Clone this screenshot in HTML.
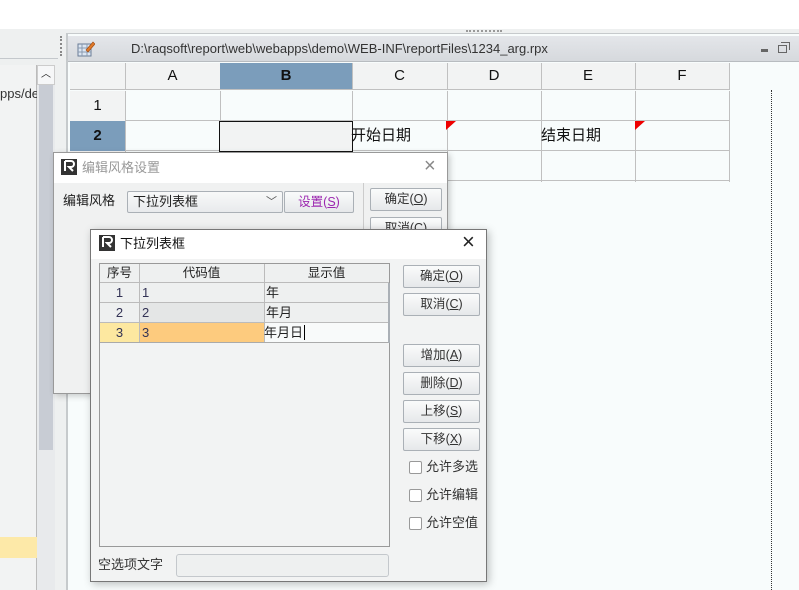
<!DOCTYPE html><html><head><style>
*{box-sizing:border-box;margin:0;padding:0}
body{width:799px;height:590px;overflow:hidden;background:#eef0f0;font-family:"Liberation Sans","Noto Sans CJK SC",sans-serif;font-size:13px;line-height:16px;color:#222;position:relative}
.a{position:absolute}
.btn{position:absolute;border:1px solid #aab0b6;border-radius:2px;background:linear-gradient(#fafbfb,#e6e8ea);text-align:center;line-height:20px;font-size:12.5px;color:#333}
.cell{position:absolute;border-right:1px solid #c0c0c0;border-bottom:1px solid #c0c0c0;text-align:center;font-size:15px;line-height:29px;color:#111}
.cb{position:absolute;width:13px;height:13px;border:1px solid #999;border-radius:2px;background:#fff}
</style></head><body>
<div class="a" style="left:0;top:0;width:799px;height:29px;background:#fff"></div>
<div class="a" style="left:466px;top:30px;width:36px;height:3px;border-top:2px dotted #999"></div>
<!-- left panel -->
<div class="a" style="left:0;top:58px;width:58px;height:1px;background:#c4c8cc"></div>
<div class="a" style="left:0;top:65px;width:37px;height:525px;background:#f2f3f3;border-right:1px solid #bbb"></div>
<div class="a" style="left:0;top:86px;font-size:13px;color:#333">pps/de</div>
<div class="a" style="left:37px;top:65px;width:18px;height:525px;background:#e8eaec"></div>
<div class="a" style="left:37px;top:65px;width:18px;height:20px;background:#f6f7f8;border:1px solid #ccc;font-size:10px;text-align:center;line-height:18px">︿</div>
<div class="a" style="left:39px;top:85px;width:14px;height:365px;background:#c8ccd4"></div>
<div class="a" style="left:0;top:537px;width:37px;height:21px;background:#fde9a8"></div>
<div class="a" style="left:60px;top:36px;width:4px;height:20px;border-left:2px dotted #888"></div>
<!-- main doc -->
<div class="a" style="left:66px;top:33px;width:733px;height:557px;background:#f8fcfc;border-left:2px solid #c6cacc;border-top:1px solid #c6cacc"></div>
<div class="a" style="left:68px;top:36px;width:731px;height:26px;background:linear-gradient(#e4e6ea,#d6d9dd);border-bottom:1px solid #b8bcc0"></div>
<svg class="a" style="left:77px;top:40px" width="18" height="18"><rect x="1" y="4" width="13" height="12" fill="#dce6f2" stroke="#6a7c96"/><path d="M1 8h13M1 12h13M5 4v12M10 4v12" stroke="#8a9ab0"/><path d="M9 10l7-8 2 2-7 8z" fill="#e07a2a" stroke="#a04a10" stroke-width=".6"/></svg>
<div class="a" style="left:131px;top:41px;font-size:13px;color:#333">D:\raqsoft\report\web\webapps\demo\WEB-INF\reportFiles\1234_arg.rpx</div>
<div class="a" style="left:761px;top:49px;width:7px;height:3px;background:#666"></div>
<div class="a" style="left:778px;top:45px;width:9px;height:8px;border:1px solid #666"></div>
<div class="a" style="left:781px;top:42px;width:9px;height:8px;border-top:1px solid #666;border-right:1px solid #666"></div>
<!-- grid header -->
<div class="a" style="left:70px;top:63px;width:660px;height:27px;background:#f2f3f3"></div>
<div class="cell" style="left:70px;top:63px;width:56px;height:27px;line-height:26px"></div>
<div class="cell" style="left:125px;top:63px;width:96px;height:27px;line-height:26px">A</div>
<div class="cell" style="left:220px;top:63px;width:133px;height:27px;line-height:26px;background:#7b9dbb;font-weight:bold">B</div>
<div class="cell" style="left:352px;top:63px;width:96px;height:27px;line-height:26px">C</div>
<div class="cell" style="left:447px;top:63px;width:95px;height:27px;line-height:26px">D</div>
<div class="cell" style="left:541px;top:63px;width:95px;height:27px;line-height:26px">E</div>
<div class="cell" style="left:635px;top:63px;width:95px;height:27px;line-height:26px">F</div>
<div class="cell" style="left:70px;top:91px;width:56px;height:31px;background:#f2f3f3">1</div>
<div class="cell" style="left:70px;top:121px;width:56px;height:31px;background:#7b9dbb;font-weight:bold">2</div>
<div class="cell" style="left:70px;top:151px;width:56px;height:31px;background:#f2f3f3"></div>
<div class="a" style="left:125px;top:91px;width:605px;height:91px;border-left:1px solid #c0c0c0;background:
linear-gradient(#c0c0c0,#c0c0c0) 0 29px/100% 1px no-repeat,linear-gradient(#c0c0c0,#c0c0c0) 0 59px/100% 1px no-repeat,linear-gradient(#c0c0c0,#c0c0c0) 0 89px/100% 1px no-repeat,
linear-gradient(#c0c0c0,#c0c0c0) 94px 0/1px 100% no-repeat,linear-gradient(#c0c0c0,#c0c0c0) 226px 0/1px 100% no-repeat,linear-gradient(#c0c0c0,#c0c0c0) 321px 0/1px 100% no-repeat,linear-gradient(#c0c0c0,#c0c0c0) 415px 0/1px 100% no-repeat,linear-gradient(#c0c0c0,#c0c0c0) 509px 0/1px 100% no-repeat,linear-gradient(#c0c0c0,#c0c0c0) 603px 0/1px 100% no-repeat"></div>
<div class="a" style="left:219px;top:121px;width:134px;height:31px;border:1px solid #111;background:#f2f3f3"></div>
<div class="a" style="left:351px;top:128px;font-size:15px;color:#111">开始日期</div>
<div class="a" style="left:541px;top:128px;font-size:15px;color:#111">结束日期</div>
<svg class="a" style="left:446px;top:121px" width="10" height="10"><path d="M0 0h10L0 9z" fill="#e00"/></svg>
<svg class="a" style="left:635px;top:121px" width="10" height="10"><path d="M0 0h10L0 9z" fill="#e00"/></svg>
<div class="a" style="left:771px;top:90px;width:1px;height:500px;border-left:1px dotted #333"></div>
<!-- dialog 1 -->
<div class="a" style="left:53px;top:152px;width:395px;height:242px;background:#f0f1f1;border:1px solid #999;box-shadow:2px 2px 6px rgba(0,0,0,.2)"></div>
<div class="a" style="left:54px;top:153px;width:393px;height:30px;background:#fff"></div>
<svg class="a" style="left:61px;top:159px" width="16" height="16"><rect width="16" height="16" fill="#333"/><path d="M4 2h6a3 3 0 0 1 0 6h-2l4 4M4 2v10" stroke="#fff" stroke-width="2" fill="none"/></svg>
<div class="a" style="left:82px;top:160px;font-size:13px;color:#999">编辑风格设置</div>
<div class="a" style="left:424px;top:158px;font-size:20px;color:#888">×</div>
<div class="a" style="left:54px;top:183px;width:310px;height:210px;border-right:1px solid #ccc"></div>
<div class="a" style="left:63px;top:193px;font-size:13px">编辑风格</div>
<div class="a" style="left:127px;top:191px;width:156px;height:22px;border:1px solid #aab0b6;border-radius:2px;background:linear-gradient(#f8f9f9,#e8eaec);padding-left:5px;line-height:20px;font-size:13px">下拉列表框<span style="position:absolute;right:5px;color:#555;font-size:11px">﹀</span></div>
<div class="btn" style="left:284px;top:191px;width:70px;height:22px;color:#9c27b0">设置(<u>S</u>)</div>
<div class="btn" style="left:370px;top:188px;width:72px;height:23px">确定(<u>O</u>)</div>
<div class="btn" style="left:370px;top:217px;width:72px;height:23px">取消(<u>C</u>)</div>
<!-- dialog 2 -->
<div class="a" style="left:90px;top:229px;width:397px;height:353px;background:#f2f3f3;border:1px solid #777;box-shadow:2px 2px 8px rgba(0,0,0,.25)"></div>
<div class="a" style="left:91px;top:230px;width:395px;height:29px;background:#fff"></div>
<svg class="a" style="left:99px;top:235px" width="16" height="16"><rect width="16" height="16" fill="#333"/><path d="M4 2h6a3 3 0 0 1 0 6h-2l4 4M4 2v10" stroke="#fff" stroke-width="2" fill="none"/></svg>
<div class="a" style="left:120px;top:236px;font-size:13px;color:#111">下拉列表框</div>
<div class="a" style="left:462px;top:234px;font-size:22px;color:#222">×</div>
<div class="a" style="left:99px;top:263px;width:291px;height:284px;border:1px solid #999;background:#f2f3f3"></div>
<div class="a" style="left:100px;top:264px;width:289px;height:19px;background:#eef0f0;border-bottom:1px solid #bbb"></div>
<div class="a" style="left:100px;top:265px;width:39px;text-align:center;font-size:12.5px">序号</div>
<div class="a" style="left:139px;top:265px;width:125px;text-align:center;font-size:12.5px">代码值</div>
<div class="a" style="left:264px;top:265px;width:125px;text-align:center;font-size:12.5px">显示值</div>
<div class="a" style="left:139px;top:264px;width:1px;height:79px;background:#bbb"></div>
<div class="a" style="left:264px;top:264px;width:1px;height:79px;background:#bbb"></div>
<div class="a" style="left:100px;top:283px;width:289px;height:20px;background:#eef0f0;border-bottom:1px solid #bbb"></div>
<div class="a" style="left:100px;top:303px;width:289px;height:20px;background:#eef0f0;border-bottom:1px solid #bbb"></div>
<div class="a" style="left:140px;top:303px;width:124px;height:19px;background:#e4e6e6"></div>
<div class="a" style="left:139px;top:283px;width:1px;height:60px;background:#bbb"></div>
<div class="a" style="left:264px;top:283px;width:1px;height:60px;background:#bbb"></div>
<div class="a" style="left:100px;top:323px;width:39px;height:20px;background:#fde8a0"></div>
<div class="a" style="left:140px;top:323px;width:124px;height:20px;background:#fdcb7e"></div>
<div class="a" style="left:265px;top:323px;width:124px;height:20px;background:#f8fafa"></div>
<div class="a" style="left:100px;top:342px;width:289px;height:1px;background:#aaa"></div>
<div class="a" style="left:388px;top:283px;width:2px;height:60px;background:#aab0b6"></div>
<div class="a" style="left:100px;top:285px;width:39px;text-align:center;color:#335">1</div>
<div class="a" style="left:100px;top:305px;width:39px;text-align:center;color:#335">2</div>
<div class="a" style="left:100px;top:325px;width:39px;text-align:center;color:#335">3</div>
<div class="a" style="left:142px;top:285px;color:#335">1</div>
<div class="a" style="left:142px;top:305px;color:#335">2</div>
<div class="a" style="left:142px;top:325px;color:#335">3</div>
<div class="a" style="left:266px;top:285px">年</div>
<div class="a" style="left:266px;top:305px">年月</div>
<div class="a" style="left:264px;top:325px">年月日<span style="border-left:1px solid #000;margin-left:1px"></span></div>
<div class="btn" style="left:403px;top:265px;width:77px;height:23px">确定(<u>O</u>)</div>
<div class="btn" style="left:403px;top:293px;width:77px;height:23px">取消(<u>C</u>)</div>
<div class="btn" style="left:403px;top:344px;width:77px;height:23px">增加(<u>A</u>)</div>
<div class="btn" style="left:403px;top:372px;width:77px;height:23px">删除(<u>D</u>)</div>
<div class="btn" style="left:403px;top:400px;width:77px;height:23px">上移(<u>S</u>)</div>
<div class="btn" style="left:403px;top:428px;width:77px;height:23px">下移(<u>X</u>)</div>
<div class="cb" style="left:409px;top:461px"></div><div class="a" style="left:426px;top:459px;color:#333">允许多选</div>
<div class="cb" style="left:409px;top:489px"></div><div class="a" style="left:426px;top:487px;color:#333">允许编辑</div>
<div class="cb" style="left:409px;top:517px"></div><div class="a" style="left:426px;top:515px;color:#333">允许空值</div>
<div class="a" style="left:98px;top:557px;color:#333">空选项文字</div>
<div class="a" style="left:176px;top:554px;width:213px;height:23px;border:1px solid #c4c8cc;border-radius:3px;background:#eef0f0"></div>
</body></html>
